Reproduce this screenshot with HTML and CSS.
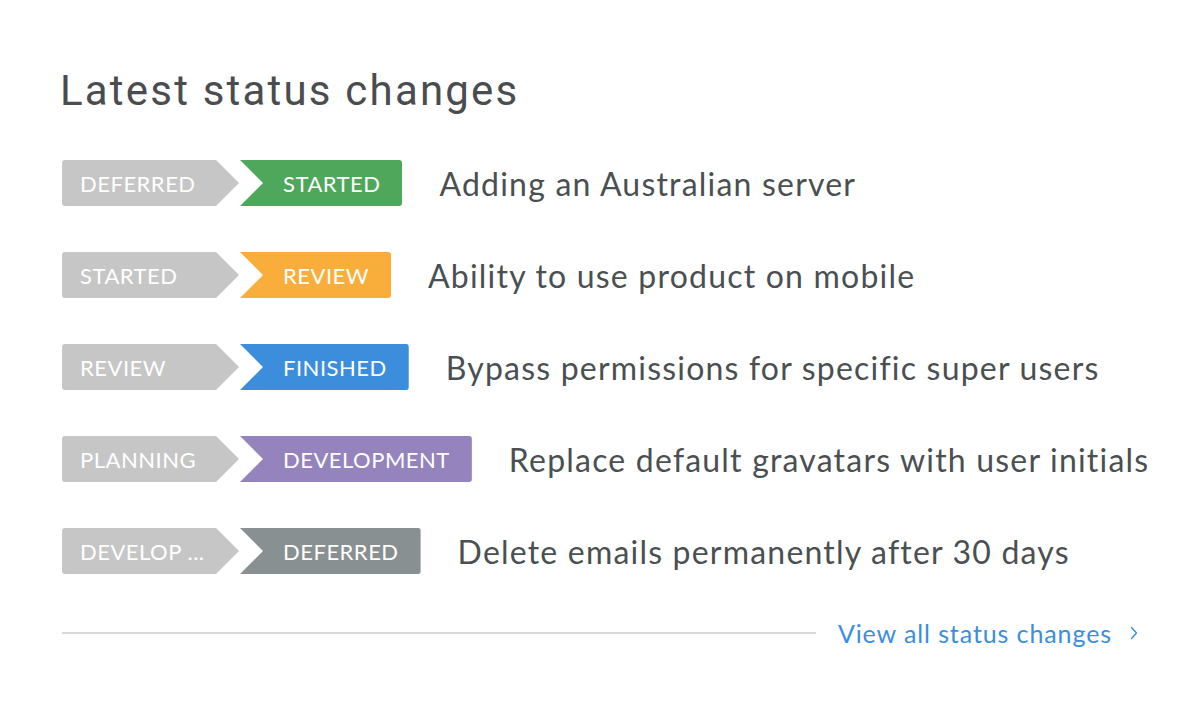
FILE: index.html
```html
<!DOCTYPE html>
<html lang="en">
<head>
<meta charset="utf-8">
<title>Latest status changes</title>
<link rel="stylesheet" href="styles.css">
</head>
<body>
<main class="panel">
  <h1 class="title">Latest status changes</h1>
  <ul class="changes">
    <li class="change">
      <span class="from">DEFERRED</span>
      <span class="to to-started">STARTED</span>
      <span class="desc">Adding an Australian server</span>
    </li>
    <li class="change">
      <span class="from">STARTED</span>
      <span class="to to-review">REVIEW</span>
      <span class="desc">Ability to use product on mobile</span>
    </li>
    <li class="change">
      <span class="from">REVIEW</span>
      <span class="to to-finished">FINISHED</span>
      <span class="desc">Bypass permissions for specific super users</span>
    </li>
    <li class="change">
      <span class="from">PLANNING</span>
      <span class="to to-development">DEVELOPMENT</span>
      <span class="desc">Replace default gravatars with user initials</span>
    </li>
    <li class="change">
      <span class="from">DEVELOP ...</span>
      <span class="to to-deferred">DEFERRED</span>
      <span class="desc">Delete emails permanently after 30 days</span>
    </li>
  </ul>
  <footer class="footer">
    <span class="rule"></span>
    <a class="view-all" href="#">View all status changes</a>
    <svg class="chevron" width="8" height="14" viewBox="0 0 8 14" aria-hidden="true"><path d="M1.5 1.5 L6.5 7 L1.5 12.5" fill="none" stroke="#3a8ee0" stroke-width="1.4" stroke-linecap="round" stroke-linejoin="round"/></svg>
  </footer>
</main>
</body>
</html>
```

FILE: styles.css
```css
* { box-sizing: border-box; }
html, body { margin: 0; padding: 0; background: #ffffff; }
body { font-family: "Lato", "Liberation Sans", sans-serif; color: #4a4f52; }

.panel {
  width: 1200px;
  height: 706px;
  padding: 70px 62px 0 62px;
}

.title {
  margin: 0 0 48px -2px;
  font-family: "Roboto", "Liberation Sans", sans-serif;
  font-weight: 400;
  font-size: 42px;
  line-height: 42px;
  color: #4a4d50;
  letter-spacing: 2.2px;
}

.changes {
  list-style: none;
  margin: 0;
  padding: 0;
  display: flex;
  flex-direction: column;
  gap: 46px;
}

.change {
  display: flex;
  align-items: center;
  height: 46px;
}

.from, .to {
  flex-shrink: 0;
  height: 46px;
  display: flex;
  align-items: center;
  font-size: 22px;
  letter-spacing: 0.5px;
  color: #ffffff;
  white-space: nowrap;
}

.from {
  width: 177px;
  padding-left: 18px;
  background: #c6c6c6;
  border-radius: 3px 0 0 3px;
  clip-path: polygon(0 0, calc(100% - 23px) 0, 100% 50%, calc(100% - 23px) 100%, 0 100%);
}

.to {
  margin-left: 1px;
  padding: 0 22px 0 43px;
  border-radius: 0 3px 3px 0;
  clip-path: polygon(0 0, 100% 0, 100% 100%, 0 100%, 23px 50%);
}

.to-started { background: #4ea75b; }
.to-review { background: #f9ae3c; }
.to-finished { background: #3c8edd; }
.to-development { background: #9483bd; }
.to-deferred { background: #899091; }

.desc {
  margin-left: 37px;
  font-size: 32px;
  letter-spacing: 1.2px;
  color: #4a4f52;
  white-space: nowrap;
}

.footer {
  display: flex;
  align-items: center;
  height: 30px;
  margin-top: 44px;
}

.rule {
  flex: 1;
  height: 2px;
  background: #d7d9da;
}

.view-all {
  margin-left: 22px;
  font-size: 25px;
  letter-spacing: 0.9px;
  color: #3a8ee0;
  text-decoration: none;
}

.chevron {
  margin-left: 18px;
  display: block;
}
```
